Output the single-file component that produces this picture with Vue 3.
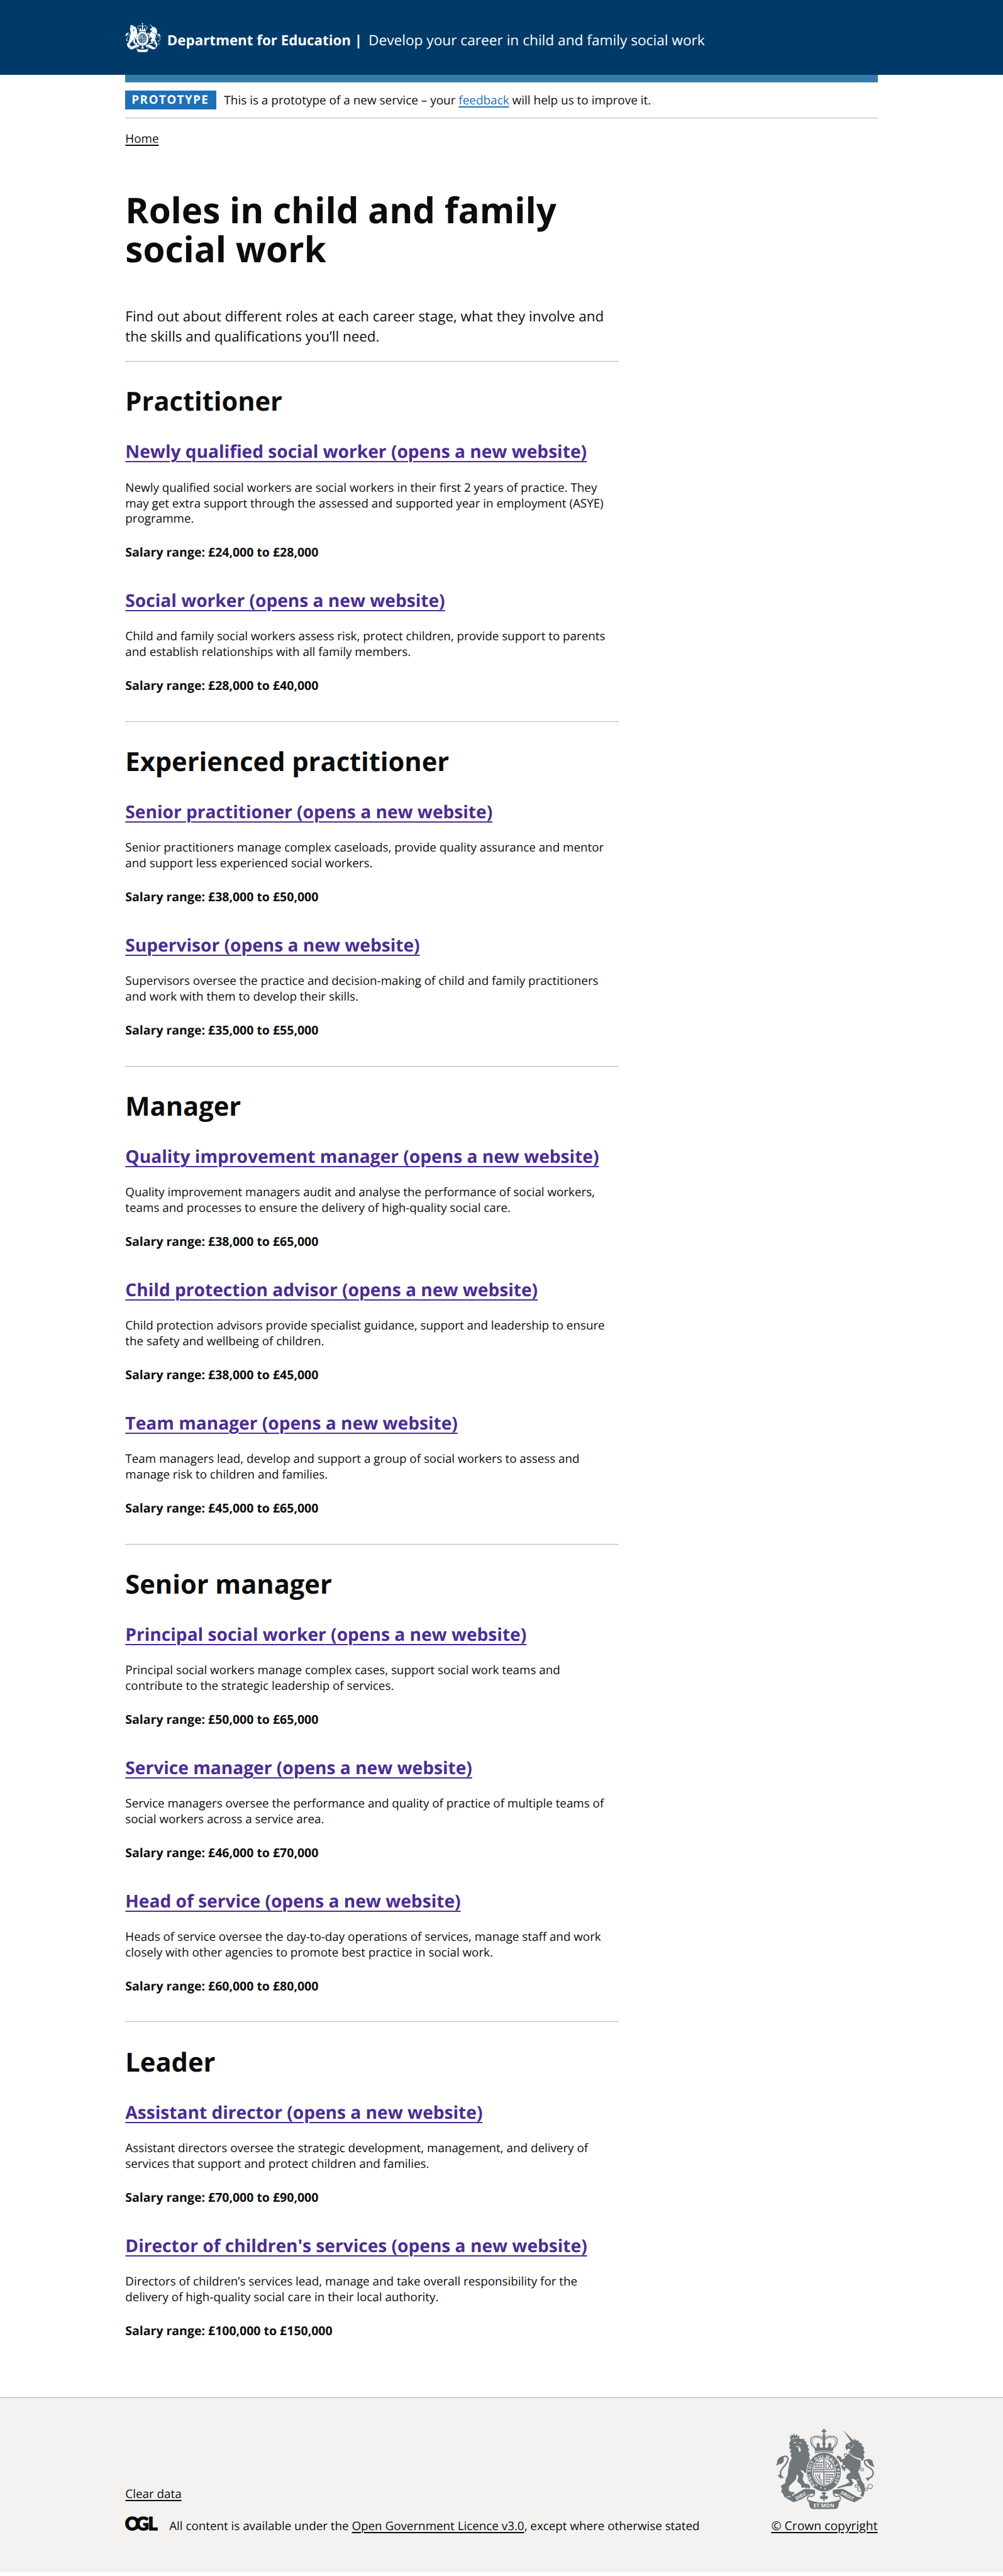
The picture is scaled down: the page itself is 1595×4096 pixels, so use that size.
<script setup>
import { h } from 'vue'

const sections = [
  {
    title: 'Practitioner',
    roles: [
      { name: 'Newly qualified social worker', lines: ['Newly qualified social workers are social workers in their first 2 years of practice. They', 'may get extra support through the assessed and supported year in employment (ASYE)', 'programme.'], salary: '£24,000 to £28,000' },
      { name: 'Social worker', lines: ['Child and family social workers assess risk, protect children, provide support to parents', 'and establish relationships with all family members.'], salary: '£28,000 to £40,000' },
    ],
  },
  {
    title: 'Experienced practitioner',
    roles: [
      { name: 'Senior practitioner', lines: ['Senior practitioners manage complex caseloads, provide quality assurance and mentor', 'and support less experienced social workers.'], salary: '£38,000 to £50,000' },
      { name: 'Supervisor', lines: ['Supervisors oversee the practice and decision-making of child and family practitioners', 'and work with them to develop their skills.'], salary: '£35,000 to £55,000' },
    ],
  },
  {
    title: 'Manager',
    roles: [
      { name: 'Quality improvement manager', lines: ['Quality improvement managers audit and analyse the performance of social workers,', 'teams and processes to ensure the delivery of high-quality social care.'], salary: '£38,000 to £65,000' },
      { name: 'Child protection advisor', lines: ['Child protection advisors provide specialist guidance, support and leadership to ensure', 'the safety and wellbeing of children.'], salary: '£38,000 to £45,000' },
      { name: 'Team manager', lines: ['Team managers lead, develop and support a group of social workers to assess and', 'manage risk to children and families.'], salary: '£45,000 to £65,000' },
    ],
  },
  {
    title: 'Senior manager',
    roles: [
      { name: 'Principal social worker', lines: ['Principal social workers manage complex cases, support social work teams and', 'contribute to the strategic leadership of services.'], salary: '£50,000 to £65,000' },
      { name: 'Service manager', lines: ['Service managers oversee the performance and quality of practice of multiple teams of', 'social workers across a service area.'], salary: '£46,000 to £70,000' },
      { name: 'Head of service', lines: ['Heads of service oversee the day-to-day operations of services, manage staff and work', 'closely with other agencies to promote best practice in social work.'], salary: '£60,000 to £80,000' },
    ],
  },
  {
    title: 'Leader',
    roles: [
      { name: 'Assistant director', lines: ['Assistant directors oversee the strategic development, management, and delivery of', 'services that support and protect children and families.'], salary: '£70,000 to £90,000' },
      { name: "Director of children's services", lines: ['Directors of children’s services lead, manage and take overall responsibility for the', 'delivery of high-quality social care in their local authority.'], salary: '£100,000 to £150,000' },
    ],
  },
]

// Royal coat of arms, shared by the header and the footer.
const Crest = (props) => {
  const ink = props.ink
  const bg = props.paper
  const p = (d, o = {}) => h('path', { d, fill: ink, ...o })
  const s = (d, w, o = {}) => h('path', { d, fill: 'none', stroke: ink, 'stroke-width': w, 'stroke-linecap': 'round', ...o })
  const c = (cx, cy, r, o = {}) => h('circle', { cx, cy, r, fill: bg, stroke: ink, 'stroke-width': 4, ...o })
  const scroll = () => [
    p('M128 450L160 444L196 424L235 401Q268 396 300 406L294 428Q268 424 252 440L222 458L176 476Z'),
    s('M292 408C306 430 284 452 264 438C248 452 256 470 276 478', 6),
  ]
  return h('svg', { viewBox: '75 55 563 461', 'aria-hidden': 'true' }, [
    // imperial crown
    p('M345 55h10v8h8v10h-8v9h-10v-9h-8v-10h8zM342 86h16v10h-16z'),
    s('M302 168C262 140 266 98 304 98Q328 96 346 110', 8, { 'stroke-dasharray': '1 9' }),
    s('M398 168C438 140 434 98 396 98Q372 96 354 110', 8, { 'stroke-dasharray': '1 9' }),
    s('M304 165C274 140 280 106 308 105Q328 104 342 116', 3),
    s('M396 165C426 140 420 106 392 105Q372 104 358 116', 3),
    p('M343 96h14v50h-14z'),
    p('M294 160L306 166L310 150L305 147L317 132L328 147L323 150L330 164L343 162L345 148L338 146L350 130L362 146L355 148L357 162L370 164L377 150L372 147L383 132L395 147L390 150L394 166L406 160L400 186Q350 172 300 186Z'),
    s('M300 192Q350 178 400 192', 6),
    // lion
    p('M154 92L162 100L166 84L175 96L177 78L184 96L196 84L198 100L210 94L208 116L160 124Z'),
    s('M166 112L202 106', 3, { stroke: bg }),
    p('M156 126L176 114L212 112L240 114L238 124L250 130L248 142L262 150L256 160L266 172L260 184L270 204L264 216L274 238L268 250L282 284L278 312L262 300L264 318L248 320L250 308L238 306L230 294L214 292L234 316L228 344L240 368L262 372L272 386L266 398L256 390L248 398L240 390L222 394L218 376L196 356L204 330L196 314L188 346L150 384L148 408L164 418L178 416L182 432L170 428L166 444L150 440L140 446L122 446L118 432L104 414L110 400L102 382L128 366L130 346L142 320L144 296L152 250L166 222L158 208L164 198L154 186L162 176L150 164L156 148L150 144Z'),
    s('M176 136l14 -4M208 134l12 4M190 152l10 8l10 -6', 4, { stroke: bg }),
    p('M202 162l12 0l4 20l-10 6z', { fill: bg }),
    s('M104 322C84 290 146 262 144 226C140 204 112 210 106 232', 8),
    p('M74 266Q84 252 82 236Q92 214 122 210Q118 226 120 240Q112 256 94 258Z'),
    p('M84 322L102 316L124 340L104 334L106 344Z'),
    // unicorn
    p('M462 66L468 70L518 122L506 130Z'),
    p('M502 130L520 122L526 110L532 122L548 122L552 134L568 140L566 150L580 164L576 176L584 190L576 202L582 216L574 236L552 238L520 222L490 206L488 188L504 176L490 168L482 178L472 164L476 144Z'),
    s('M492 190Q520 222 560 230', 9, { stroke: bg }),
    s('M496 188l4 14l8 -8l4 16l8 -8l6 14l8 -8l6 12l10 -6', 4),
    s('M488 148l10 4M522 146q-4 14 -18 18', 3, { stroke: bg }),
    p('M482 200L560 240L560 276L546 300L558 328L566 352L582 376L584 412L576 444L558 440L566 420L562 396L544 376L536 350L514 340L506 344L520 366L508 382L480 384L430 396L426 390L470 374L496 362L490 348L476 338L484 314L504 304L492 288L474 278L470 300L454 284L446 262L458 268L456 246L442 244L434 228L420 222L428 208L446 214L452 230L466 226Z'),
    s('M596 342C646 330 640 290 604 274C570 252 580 222 608 240L618 256', 8),
    p('M592 232Q612 222 628 238Q630 256 640 274Q620 270 612 262Z'),
    p('M590 334L612 336L604 356Z'),
    c(615, 385, 13), c(592, 401, 8), c(553, 403, 10), c(536, 383, 8), c(568, 288, 8), c(545, 347, 6), c(465, 268, 8), c(474, 205, 8),
    // garter and shield
    h('ellipse', { cx: 350, cy: 303, rx: 99, ry: 113, fill: ink, stroke: bg, 'stroke-width': 4 }),
    h('ellipse', { cx: 350, cy: 300, rx: 69, ry: 80, fill: bg }),
    h('ellipse', { cx: 350, cy: 300, rx: 63, ry: 74, fill: 'none', stroke: ink, 'stroke-width': 4 }),
    s('M300 262h42M300 276h42M296 288h46M306 248h36', 7, { 'stroke-dasharray': '8 7' }),
    s('M362 240v48h40V262L378 236M372 250l18 32M390 258l-18 24', 5),
    s('M302 318q4 30 36 46M314 316q4 20 24 36M326 314v18', 5),
    s('M362 318h40M362 331h38M362 344h30M362 357h18', 7, { 'stroke-dasharray': '8 7' }),
    s('M350 228v144M290 301h120', 9),
    s('M350 228v144M290 301h120', 2, { stroke: bg }),
    c(332, 392, 4, { stroke: 'none' }), c(356, 399, 4, { stroke: 'none' }), c(308, 378, 4, { stroke: 'none' }),
    ...(props.mottoes ? [
      h('path', { id: 'garter-line', d: 'M302 378A76 88 0 1 1 404 368', fill: 'none' }),
      h('text', { class: 'motto', fill: bg, 'font-size': 23 }, [h('textPath', { href: '#garter-line', textLength: 395 }, 'HONI SOIT QUI MAL Y PENSE')]),
    ] : []),
    // scroll
    ...scroll(),
    h('g', { transform: 'translate(700 0) scale(-1 1)' }, scroll()),
    p('M262 462Q350 494 438 462L433 498Q428 515 405 515H295Q272 515 267 498Z'),
    p('M338 418h24v10l-6 4v10l12 -4l6 12l-10 10l-8 -4l-6 18l-6 -18l-8 4l-10 -10l6 -12l12 4v-10l-6 -4z'),
    ...(props.mottoes ? [
      h('text', { class: 'motto', fill: bg, 'font-size': 30, x: 350, y: 507, 'text-anchor': 'middle' }, 'ET MON'),
      h('text', { class: 'motto', fill: bg, 'font-size': 27, 'text-anchor': 'middle', transform: 'translate(221 448) rotate(-30)' }, 'DIEU'),
      h('text', { class: 'motto', fill: bg, 'font-size': 26, 'text-anchor': 'middle', transform: 'translate(479 446) rotate(30)' }, 'DROIT'),
    ] : []),
  ])
}
Crest.props = { ink: String, paper: String, mottoes: Boolean }
</script>

<template>
  <div class="page">
    <header class="header">
      <div class="container header-row">
        <Crest class="header-crest" ink="#ffffff" paper="#003a69" />
        <span class="dept">Department for Education |</span>
        <span class="service">Develop your career in child and family social work</span>
      </div>
    </header>

    <div class="container">
      <div class="bar"></div>
      <div class="phase">
        <strong class="tag">PROTOTYPE</strong>
        <span class="phase-text">This is a prototype of a new service – your <a class="feedback">feedback</a> will help us to improve it.</span>
      </div>
      <nav class="crumbs"><a>Home</a></nav>

      <main class="main">
        <h1>Roles in child and family<br />social work</h1>
        <p class="intro">Find out about different roles at each career stage, what they involve and<br />the skills and qualifications you’ll need.</p>

        <section v-for="section in sections" :key="section.title">
          <h2>{{ section.title }}</h2>
          <article v-for="role in section.roles" :key="role.name" class="role">
            <h3><a>{{ role.name }} (opens a new website)</a></h3>
            <p class="desc"><span v-for="line in role.lines" :key="line">{{ line }}</span></p>
            <p class="salary">Salary range: {{ role.salary }}</p>
          </article>
        </section>
      </main>
    </div>

    <footer class="footer">
      <div class="container footer-row">
        <div class="footer-left">
          <a>Clear data</a>
          <div class="licence">
            <svg class="ogl" viewBox="15 33 186 79" aria-label="OGL">
              <text x="14 76 147" y="110">OGL</text>
            </svg>
            <span>All content is available under the <a>Open Government Licence v3.0</a>, except where otherwise stated</span>
          </div>
        </div>
        <div class="footer-right">
          <Crest class="footer-crest" ink="#6f777b" paper="#f3f2f1" mottoes />
          <a class="copyright">© Crown copyright</a>
        </div>
      </div>
    </footer>
  </div>
</template>

<style>
html {
  font-size: 8.3075px;
}
body {
  margin: 0;
  background: #fff;
}
</style>

<style scoped>
.page {
  font-family: "Open Sans", "Noto Sans", sans-serif;
  font-size: 2.265rem;
  line-height: 3rem;
  color: #0b0c0c;
  height: 493rem;
  overflow: hidden;
  white-space: nowrap;
  text-rendering: geometricPrecision;
}
h1, h2, h3, p {
  margin: 0;
}
a {
  text-decoration: underline;
  text-decoration-thickness: 0.2rem;
  text-underline-offset: 0.42rem;
}
.container {
  width: 144rem;
  margin: 0 auto;
}
.header {
  height: 14.3rem;
  background: #003a69;
}
.header-row {
  display: flex;
  align-items: flex-start;
  color: #fff;
}
.header-crest {
  width: 6.8rem;
  height: 5.7rem;
  margin-top: 4.3rem;
}
.dept {
  margin: 6.26rem 0 0 1.2rem;
  font-weight: 700;
  font-size: 2.69rem;
}
.service {
  margin: 6.2rem 0 0 1.2rem;
  font-size: 2.73rem;
}
.bar {
  height: 1.5rem;
  background: #347ca9;
}
.phase {
  display: flex;
  align-items: center;
  height: 3.7rem;
  padding: 1.5rem 0;
  border-bottom: 1px solid #b1b4b6;
}
.tag {
  box-sizing: border-box;
  width: 17.4rem;
  height: 3.7rem;
  margin-right: 1.5rem;
  padding-left: 1.2rem;
  line-height: 3.6rem;
  background: #1d70b8;
  color: #fff;
  font-size: 2.27rem;
  letter-spacing: 0.17rem;
}
.phase-text {
  font-size: 2.28rem;
}
.feedback {
  color: #1d70b8;
}
.crumbs {
  margin-top: 2.4rem;
  height: 3rem;
}
.main {
  width: 94.5rem;
}
h1 {
  margin-top: 8.4rem;
  font-size: 6.8rem;
  line-height: 7.5rem;
}
.intro {
  margin-top: 7.25rem;
  margin-bottom: 2.92rem;
  font-size: 2.695rem;
  line-height: 3.75rem;
}
section {
  border-top: 1px solid #b1b4b6;
  padding: 4.71rem 0 5.28rem;
}
h2 {
  font-size: 5.01rem;
  line-height: 6rem;
  margin-bottom: 4.4rem;
}
.role + .role {
  margin-top: 5.545rem;
}
h3 {
  font-size: 3.385rem;
  line-height: 4.5rem;
  color: #4c2c92;
}
h3 a {
  text-underline-offset: 0.6rem;
}
.desc {
  margin: 2.98rem 0 3.475rem;
}
.desc span {
  display: block;
}
.salary {
  font-size: 2.345rem;
  font-weight: 700;
}
section:last-child {
  padding-bottom: 11.25rem;
}
.footer {
  border-top: 1px solid #b1b4b6;
  background: #f3f2f1;
  padding: 5.95rem 0 7.35rem;
}
.footer-row {
  display: flex;
  justify-content: space-between;
  align-items: flex-end;
}
.footer-left {
  display: flex;
  flex-direction: column;
  align-items: flex-start;
  gap: 3.1rem;
}
.licence {
  display: flex;
}
.ogl {
  width: 6.2rem;
  height: 2.63rem;
  margin: -0.22rem 2.2rem 0 0;
  fill: #0b0c0c;
  overflow: visible;
}
.ogl text {
  font: 900 104px Lato, Inter, sans-serif;
  stroke: #0b0c0c;
  stroke-width: 5;
}
.footer-right {
  display: flex;
  flex-direction: column;
  align-items: flex-end;
}
.footer-crest {
  width: 18.8rem;
  height: 15.4rem;
  margin: 0 0.7rem 1.6rem 0;
}
.copyright {
  font-size: 2.33rem;
}
.footer-crest :deep(.motto) {
  font-family: "Open Sans", sans-serif;
  font-weight: 700;
}
</style>
